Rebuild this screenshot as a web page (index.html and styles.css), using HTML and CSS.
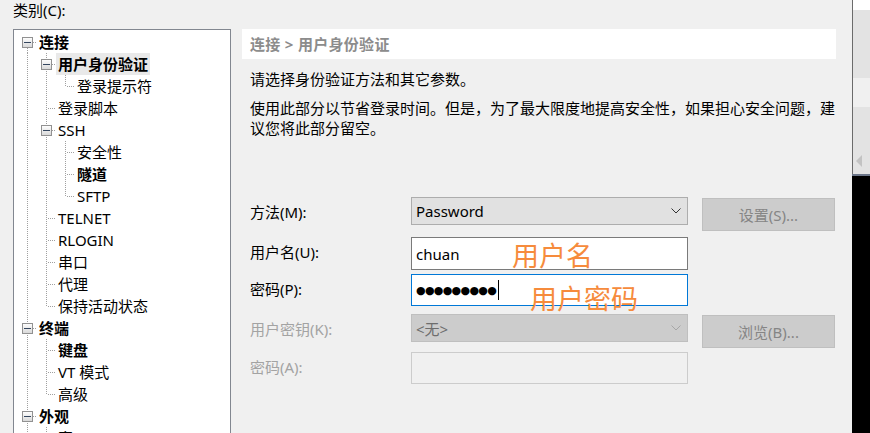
FILE: index.html
```html
<!DOCTYPE html>
<html lang="zh-CN">

<head>
  <meta charset="UTF-8" />
  <title>会话属性 - 用户身份验证</title>
  <link rel="stylesheet" href="styles.css">
</head>

<body>
  <div class="screen">
    <div class="dialog">

      <div class="cats">
        <div class="cats-label">类别(C):</div>
        <div class="tree">
          <div class="row"><span class="g g-xr"><i class="box"></i></span><span class="lbl b">连接</span></div>
          <div class="row"><span class="g g-v"></span><span class="g g-t"><i class="box"></i></span><span class="lbl b sel">用户身份验证</span></div>
          <div class="row"><span class="g g-v"></span><span class="g g-v"></span><span class="g g-l"></span><span class="lbl">登录提示符</span></div>
          <div class="row"><span class="g g-v"></span><span class="g g-t"></span><span class="lbl">登录脚本</span></div>
          <div class="row"><span class="g g-v"></span><span class="g g-t"><i class="box"></i></span><span class="lbl">SSH</span></div>
          <div class="row"><span class="g g-v"></span><span class="g g-v"></span><span class="g g-t"></span><span class="lbl">安全性</span></div>
          <div class="row"><span class="g g-v"></span><span class="g g-v"></span><span class="g g-t"></span><span class="lbl b">隧道</span></div>
          <div class="row"><span class="g g-v"></span><span class="g g-v"></span><span class="g g-l"></span><span class="lbl">SFTP</span></div>
          <div class="row"><span class="g g-v"></span><span class="g g-t"></span><span class="lbl">TELNET</span></div>
          <div class="row"><span class="g g-v"></span><span class="g g-t"></span><span class="lbl">RLOGIN</span></div>
          <div class="row"><span class="g g-v"></span><span class="g g-t"></span><span class="lbl">串口</span></div>
          <div class="row"><span class="g g-v"></span><span class="g g-t"></span><span class="lbl">代理</span></div>
          <div class="row"><span class="g g-v"></span><span class="g g-l"></span><span class="lbl">保持活动状态</span></div>
          <div class="row"><span class="g g-t"><i class="box"></i></span><span class="lbl b">终端</span></div>
          <div class="row"><span class="g g-v"></span><span class="g g-t"></span><span class="lbl b">键盘</span></div>
          <div class="row"><span class="g g-v"></span><span class="g g-t"></span><span class="lbl">VT 模式</span></div>
          <div class="row"><span class="g g-v"></span><span class="g g-l"></span><span class="lbl">高级</span></div>
          <div class="row"><span class="g g-t"><i class="box"></i></span><span class="lbl b">外观</span></div>
          <div class="row"><span class="g g-v"></span><span class="g g-t"></span><span class="lbl">窗口</span></div>
        </div>
      </div>

      <div class="panel">
        <div class="crumb">连接 &gt; 用户身份验证</div>
        <p class="desc">请选择身份验证方法和其它参数。</p>
        <p class="desc desc-2">使用此部分以节省登录时间。但是，为了最大限度地提高安全性，如果担心安全问题，建议您将此部分留空。</p>

        <div class="form">
          <div class="frow frow-1">
            <span class="flabel">方法(M):</span>
            <div class="combo">
              <span>Password</span>
              <svg class="chev" width="10" height="6" viewBox="0 0 10 6"><polyline points="0.5,0.5 5,5 9.5,0.5" /></svg>
            </div>
            <div class="btn">设置(S)...</div>
          </div>
          <div class="frow frow-2">
            <span class="flabel">用户名(U):</span>
            <div class="field">chuan</div>
          </div>
          <div class="frow frow-3">
            <span class="flabel">密码(P):</span>
            <div class="field focus"><span class="dots">●●●●●●●●●</span><span class="caret"></span></div>
          </div>
          <div class="frow frow-4">
            <span class="flabel off">用户密钥(K):</span>
            <div class="combo off">
              <span>&lt;无&gt;</span>
              <svg class="chev" width="10" height="6" viewBox="0 0 10 6"><polyline points="0.5,0.5 5,5 9.5,0.5" /></svg>
            </div>
            <div class="btn">浏览(B)...</div>
          </div>
          <div class="frow">
            <span class="flabel off">密码(A):</span>
            <div class="field off"></div>
          </div>
        </div>
      </div>

      <span class="note note-user">用户名</span>
      <span class="note note-pass">用户密码</span>
    </div>

    <div class="side">
      <div class="side-a"></div>
      <div class="side-b"></div>
      <div class="side-c"></div>
      <div class="side-d"><i class="arrow"></i></div>
      <div class="side-e"></div>
      <div class="side-f"></div>
    </div>
  </div>
</body>

</html>
```

FILE: styles.css
```css
body {
  margin: 0;
  overflow: hidden;
  background: #f0f0f0;
  color: #000;
  font-family: "Noto Sans", "Noto Sans CJK SC", sans-serif;
  font-size: 15px;
}

.screen {
  display: flex;
  height: 433px;
  overflow: hidden;
}

.dialog {
  position: relative;
  display: flex;
  width: 852px;
  padding-left: 13px;
  box-sizing: border-box;
}

/* category tree */
.cats {
  width: 218px;
  flex: none;
}

.cats-label {
  height: 29px;
  line-height: 20px;
}

.tree {
  height: 440px;
  padding: 1px 0 0 4px;
  border: 1px solid #828790;
  background: #fff;
  box-sizing: border-box;
}

.row {
  display: flex;
  height: 22px;
}

.g {
  display: block;
  flex: none;
  width: 19px;
  height: 22px;
}

.g-v {
  background: repeating-linear-gradient(#a0a0a0 0 1px, transparent 1px 2px) 9px 0 / 1px 22px no-repeat;
}

.g-t {
  background:
    repeating-linear-gradient(90deg, #a0a0a0 0 1px, transparent 1px 2px) 11px 11px / 8px 1px no-repeat,
    repeating-linear-gradient(#a0a0a0 0 1px, transparent 1px 2px) 9px 0 / 1px 22px no-repeat;
}

.g-l {
  background:
    repeating-linear-gradient(90deg, #a0a0a0 0 1px, transparent 1px 2px) 11px 11px / 8px 1px no-repeat,
    repeating-linear-gradient(#a0a0a0 0 1px, transparent 1px 2px) 9px 0 / 1px 12px no-repeat;
}

.g-xr {
  background:
    repeating-linear-gradient(90deg, #a0a0a0 0 1px, transparent 1px 2px) 11px 11px / 8px 1px no-repeat,
    repeating-linear-gradient(#a0a0a0 0 1px, transparent 1px 2px) 9px 11px / 1px 11px no-repeat;
}

.box {
  display: block;
  width: 9px;
  height: 9px;
  margin: 6px 0 0 4px;
  border: 1px solid #919191;
  background:
    linear-gradient(#34465f, #34465f) 1px 4px / 7px 1px no-repeat,
    linear-gradient(#fdfdfd, #d9d9d9);
}

.lbl {
  padding: 0 2px;
  line-height: 22px;
  white-space: nowrap;
}

.lbl.b {
  font-weight: bold;
}

.lbl.sel {
  background: #e9e9e9;
}

/* right panel */
.panel {
  width: 594px;
  margin-left: 11px;
  padding-top: 29px;
}

.crumb {
  height: 30px;
  padding-left: 8px;
  line-height: 30px;
  background: #fff;
  color: #8c8c8c;
  font-weight: bold;
  letter-spacing: 0.3px;
}

.desc {
  margin: 10px 0 0;
  padding-left: 8px;
  line-height: 20px;
}

.desc-2 {
  margin-top: 9px;
}

.form {
  margin-top: 59px;
  padding-left: 8px;
}

.frow {
  display: flex;
  align-items: flex-start;
}

.frow-1 { height: 40px; }
.frow-2 { height: 37px; }
.frow-3 { height: 40px; }
.frow-4 { height: 38px; }

.flabel {
  width: 161px;
  flex: none;
  margin-top: 5px;
  line-height: 20px;
}

.flabel.off {
  color: #a3a3a3;
}

.combo {
  display: flex;
  align-items: center;
  justify-content: space-between;
  width: 277px;
  height: 28px;
  padding: 0 6px 0 4px;
  border: 1px solid #adadad;
  background: #e1e1e1;
  box-sizing: border-box;
}

.chev polyline {
  fill: none;
  stroke: #333;
  stroke-width: 1;
}

.combo.off {
  border-color: #bfbfbf;
  background: #cccccc;
  color: #6d6d6d;
}

.combo.off .chev polyline {
  stroke: #a6a6a6;
}

.field {
  display: flex;
  align-items: center;
  width: 277px;
  height: 32px;
  padding-left: 4px;
  border: 1px solid #7a7a7a;
  background: #fff;
  box-sizing: border-box;
}

.frow-2 .field {
  height: 33px;
}

.field.focus {
  border-color: #0078d7;
}

.field.off {
  border-color: #cccccc;
  background: #f0f0f0;
}

.dots {
  font-family: "DejaVu Sans", sans-serif;
  font-size: 11px;
  letter-spacing: -0.7px;
}

.caret {
  display: block;
  width: 1px;
  height: 20px;
  margin-left: 2px;
  background: #000;
}

.btn {
  display: flex;
  align-items: center;
  justify-content: center;
  width: 133px;
  height: 33px;
  margin: 1px 0 0 14px;
  border: 1px solid #bfbfbf;
  background: #cccccc;
  color: #858585;
  box-sizing: border-box;
}

/* orange annotations drawn over the form */
.note {
  position: absolute;
  font-family: "Noto Sans CJK SC", sans-serif;
  font-size: 27px;
  line-height: 27px;
  color: #f68b3c;
  white-space: nowrap;
}

.note-user {
  left: 512px;
  top: 241px;
}

.note-pass {
  left: 530px;
  top: 284px;
}

/* strip of the window behind */
.side {
  display: flex;
  flex-direction: column;
  width: 18px;
  flex: none;
}

.side-a,
.side-b,
.side-c,
.side-d {
  border-left: 1px solid #6b6b6b;
}

.side-a { height: 10px; background: #fff; }
.side-b { height: 68px; background: #e3e3e3; }
.side-c { height: 29px; background: #f0f0f0; }
.side-d { height: 67px; background: #e3e3e3; }
.side-e { height: 2px; background: #6c7689; }
.side-f { flex: 1; background: #000; }

.arrow {
  display: block;
  width: 0;
  height: 0;
  margin: 48px 0 0 3px;
  border-top: 6px solid transparent;
  border-bottom: 6px solid transparent;
  border-right: 6px solid #c3c3c3;
}
```
